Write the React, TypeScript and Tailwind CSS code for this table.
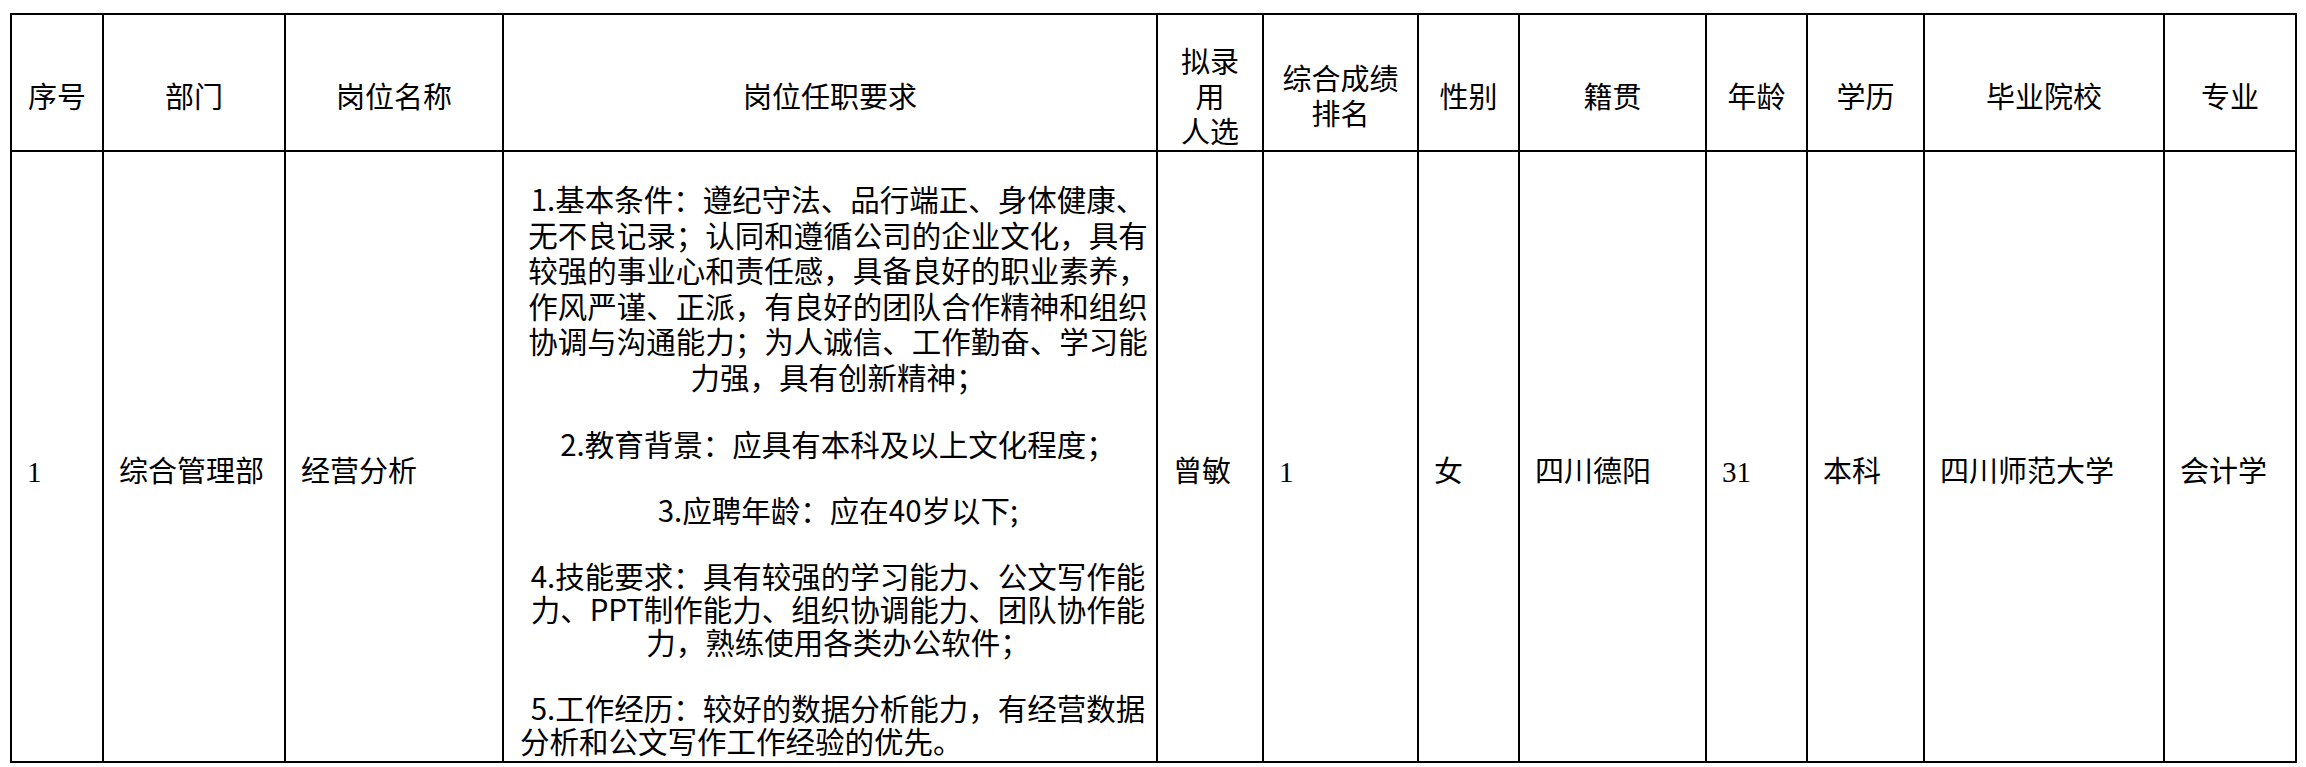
const serif = { fontFamily: '"Liberation Serif", "Noto Sans CJK SC", serif' };

const headCell =
  "flex h-[137px] items-center justify-center border-r-2 border-b-2 border-black pt-[31px] text-center text-[29px] leading-[35px] text-black";
const bodyCell =
  "flex h-[611px] items-center border-r-2 border-b-2 border-black pt-[32px] pl-[15px] text-[29px] leading-[35px] text-black whitespace-nowrap";

const reqLines: { text: string; gap?: boolean; left?: boolean; tall?: boolean }[] = [
  { text: "1.基本条件：遵纪守法、品行端正、身体健康、", tall: true },
  { text: "无不良记录；认同和遵循公司的企业文化，具有", tall: true },
  { text: "较强的事业心和责任感，具备良好的职业素养，", tall: true },
  { text: "作风严谨、正派，有良好的团队合作精神和组织", tall: true },
  { text: "协调与沟通能力；为人诚信、工作勤奋、学习能", tall: true },
  { text: "力强，具有创新精神；", tall: true },
  { text: "2.教育背景：应具有本科及以上文化程度；", gap: true },
  { text: "3.应聘年龄：应在40岁以下;", gap: true },
  { text: "4.技能要求：具有较强的学习能力、公文写作能", gap: true },
  { text: "力、PPT制作能力、组织协调能力、团队协作能" },
  { text: "力，熟练使用各类办公软件；" },
  { text: "5.工作经历：较好的数据分析能力，有经营数据", gap: true },
  { text: "分析和公文写作工作经验的优先。", left: true },
];

function Requirements() {
  return (
    <div
      className="flex h-[611px] flex-col overflow-hidden border-r-2 border-b-2 border-black pt-[29px] pl-[16px] text-[29.5px] text-black whitespace-nowrap"
      style={{ fontFamily: '"Noto Sans CJK SC", sans-serif' }}
    >
      {reqLines.map((l, i) => (
        <div key={i} className={l.gap ? "pt-[33px]" : ""}>
          <div
            className={
              (l.tall ? "h-[35.5px] leading-[35.5px] " : "h-[33px] leading-[33px] ") +
              (l.left ? "text-left" : "text-center")
            }
          >
            {l.text}
          </div>
        </div>
      ))}
    </div>
  );
}

export default function App() {
  return (
    <div className="h-[767px] w-[2306px] overflow-hidden bg-white" style={serif}>
      <div className="mt-[13px] ml-[10px] grid w-fit grid-cols-[92px_182px_218px_654px_106px_155px_101px_187px_101px_117px_240px_132px] border-t-2 border-l-2 border-black">
        <div className={headCell}>序号</div>
        <div className={headCell}>部门</div>
        <div className={headCell}>岗位名称</div>
        <div className={headCell}>岗位任职要求</div>
        <div className={headCell}>
          <div>
            拟录
            <br />
            用
            <br />
            人选
          </div>
        </div>
        <div className={headCell}>
          <div>
            综合成绩
            <br />
            排名
          </div>
        </div>
        <div className={headCell}>性别</div>
        <div className={headCell}>籍贯</div>
        <div className={headCell}>年龄</div>
        <div className={headCell}>学历</div>
        <div className={headCell}>毕业院校</div>
        <div className={headCell}>专业</div>

        <div className={bodyCell}>1</div>
        <div className={bodyCell}>综合管理部</div>
        <div className={bodyCell}>经营分析</div>
        <Requirements />
        <div className={bodyCell}>曾敏</div>
        <div className={bodyCell}>1</div>
        <div className={bodyCell}>女</div>
        <div className={bodyCell}>四川德阳</div>
        <div className={bodyCell}>31</div>
        <div className={bodyCell}>本科</div>
        <div className={bodyCell}>四川师范大学</div>
        <div className={bodyCell}>会计学</div>
      </div>
    </div>
  );
}
